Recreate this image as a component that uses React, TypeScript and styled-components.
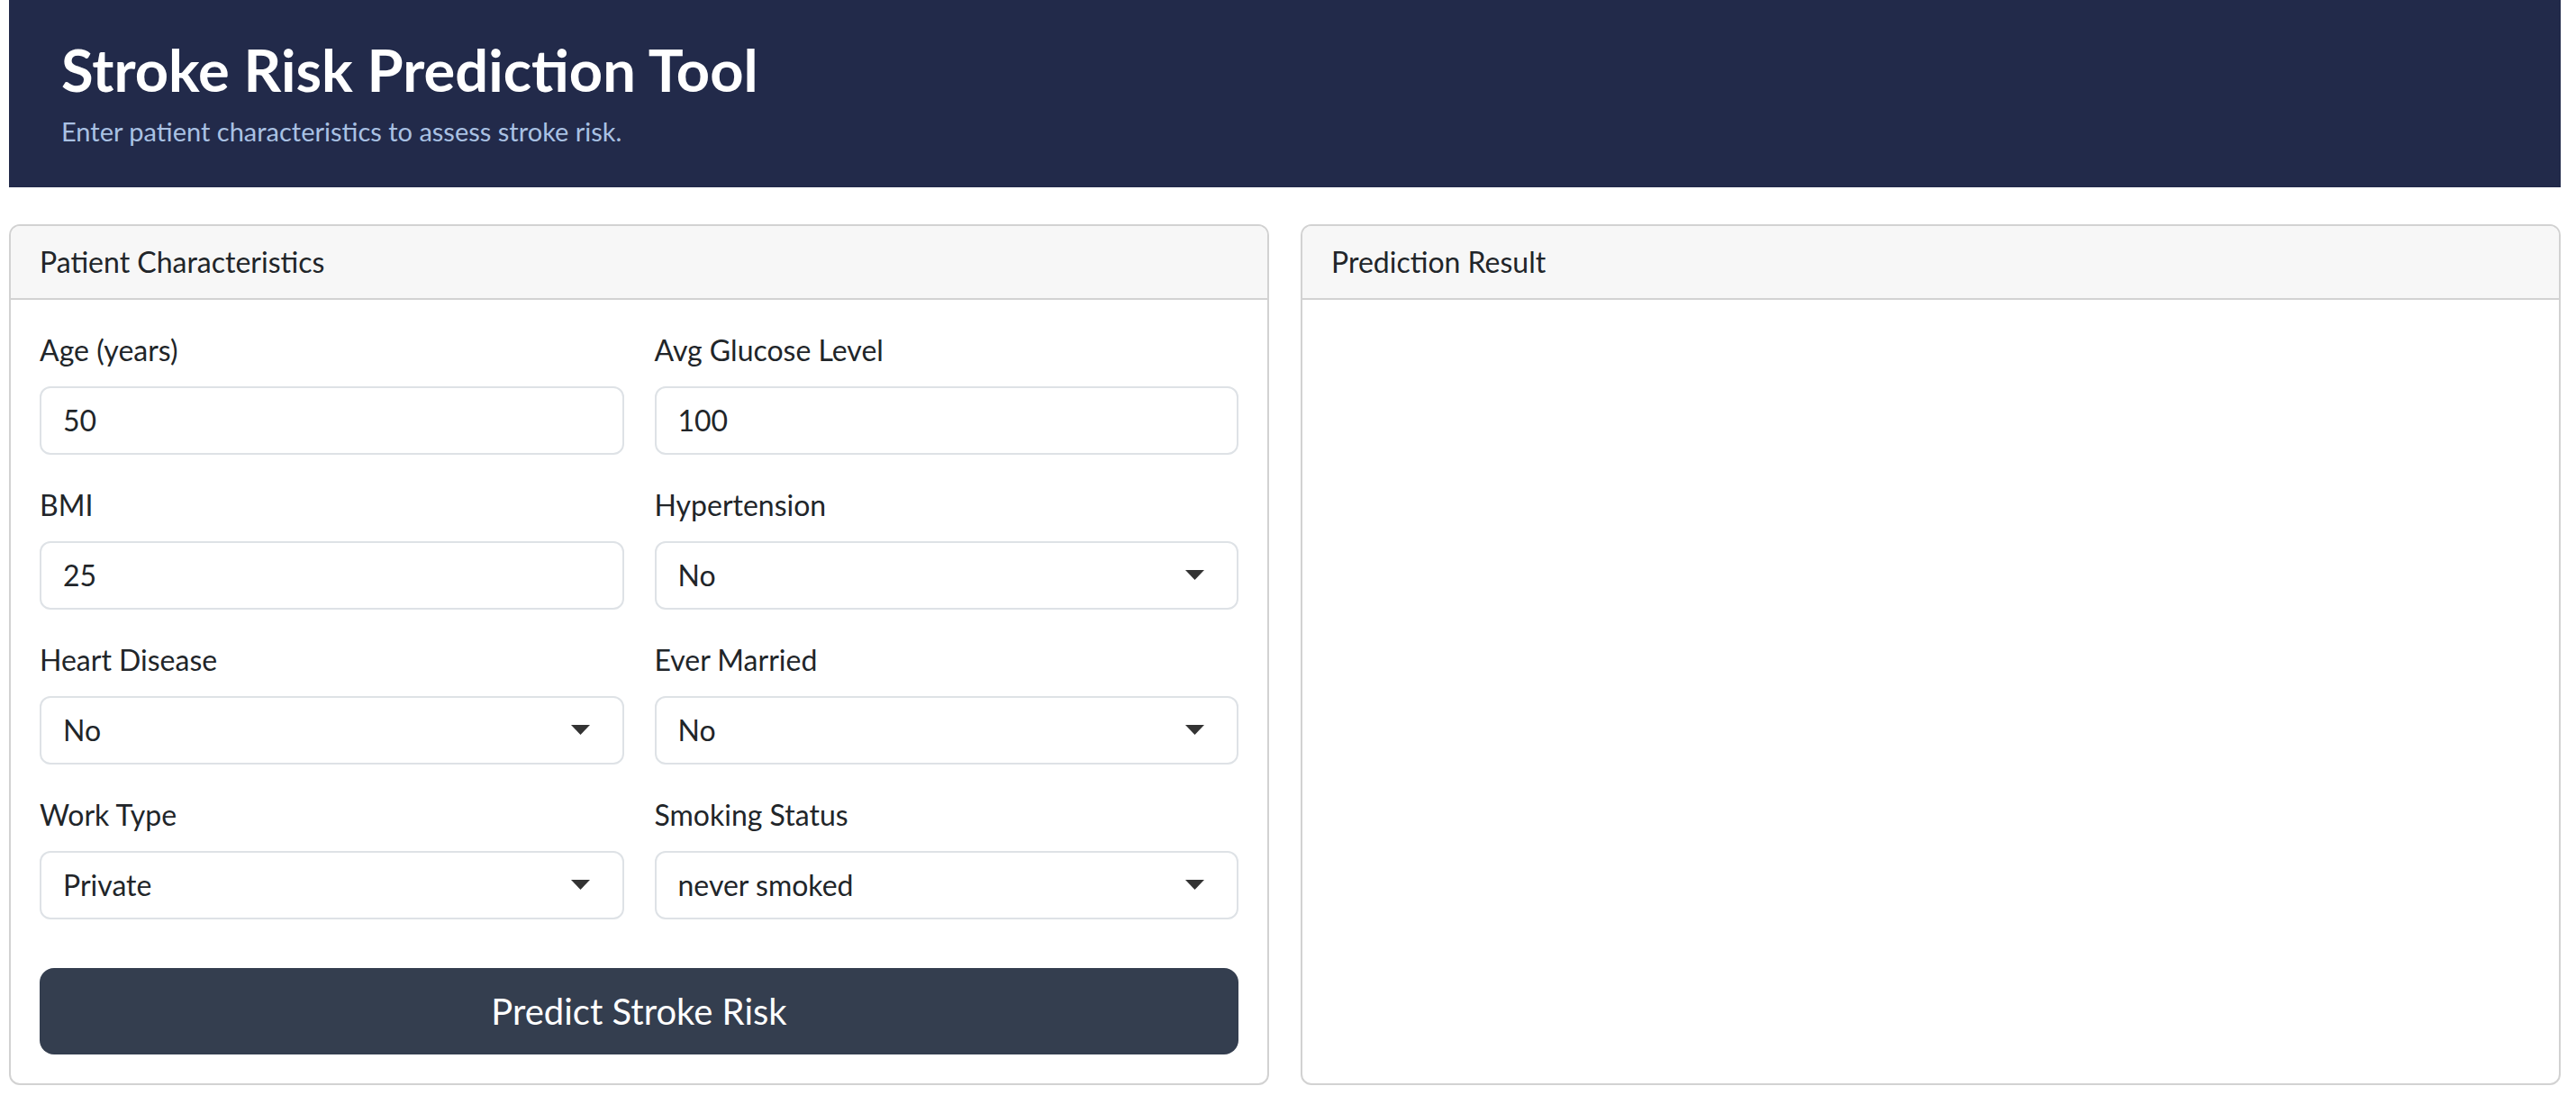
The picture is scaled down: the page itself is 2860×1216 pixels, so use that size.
import React from "react";
import styled, { createGlobalStyle } from "styled-components";

const GlobalStyle = createGlobalStyle`
  *, *::before, *::after { box-sizing: border-box; }
  html, body { margin: 0; padding: 0; background: #ffffff; }
  body {
    font-family: Lato, "Noto Sans", "Liberation Sans", sans-serif;
    font-size: 32px;
    line-height: 1.5;
    color: #212529;
  }
`;

const Page = styled.div`
  padding: 0 17px 0 10px;
`;

const Header = styled.header`
  background: #222a4a;
  padding: 38px 58px 40px;
  margin-bottom: 41px;
`;

const Title = styled.h1`
  margin: 0 0 8px;
  font-size: 65px;
  line-height: 1.2;
  font-weight: 700;
  color: #ffffff;
`;

const Subtitle = styled.p`
  margin: 0;
  font-size: 29px;
  line-height: 1.5;
  color: #a9c1e3;
`;

const Columns = styled.main`
  display: grid;
  grid-template-columns: 1fr 1fr;
  gap: 35px;
  align-items: stretch;
`;

const Card = styled.section`
  display: flex;
  flex-direction: column;
  border: 2px solid #d2d2d2;
  border-radius: 12px;
  background: #ffffff;
  overflow: hidden;
`;

const CardHeader = styled.div`
  background: #f7f7f7;
  border-bottom: 2px solid #d2d2d2;
  padding: 16px 32px;
  font-size: 32px;
  line-height: 48px;
  color: #212529;
`;

const CardBody = styled.div`
  flex: 1;
  padding: 32px;
`;

const FormGrid = styled.div`
  display: grid;
  grid-template-columns: 1fr 1fr;
  column-gap: 34px;
  row-gap: 32px;
`;

const Field = styled.div`
  display: flex;
  flex-direction: column;
`;

const Label = styled.label`
  font-size: 32px;
  line-height: 48px;
  margin-bottom: 16px;
  color: #212529;
`;

const controlStyles = `
  width: 100%;
  height: 76px;
  padding: 12px 24px;
  font-family: Lato, "Noto Sans", "Liberation Sans", sans-serif;
  font-size: 32px;
  line-height: 48px;
  color: #212529;
  background: #ffffff;
  border: 2px solid #dee2e6;
  border-radius: 12px;
  outline: none;
`;

const TextInput = styled.input`
  ${controlStyles}
`;

const SelectWrap = styled.div`
  position: relative;
`;

const Select = styled.select`
  ${controlStyles}
  appearance: none;
  -webkit-appearance: none;
  padding-right: 72px;
`;

const Caret = styled.svg`
  position: absolute;
  right: 38px;
  top: 50%;
  width: 21px;
  height: 11px;
  margin-top: -6px;
  pointer-events: none;
`;

const PredictButton = styled.button`
  display: block;
  width: 100%;
  margin-top: 54px;
  height: 96px;
  padding: 16px 32px;
  border: none;
  border-radius: 16px;
  background: #343e4f;
  color: #ffffff;
  font-family: Lato, "Noto Sans", "Liberation Sans", sans-serif;
  font-size: 40px;
  line-height: 60px;
  cursor: pointer;
`;

type SelectFieldProps = { label: string; value: string; options: string[] };

const SelectField: React.FC<SelectFieldProps> = ({ label, value, options }) => (
  <Field>
    <Label>{label}</Label>
    <SelectWrap>
      <Select defaultValue={value}>
        {options.map((o) => (
          <option key={o} value={o}>
            {o}
          </option>
        ))}
      </Select>
      <Caret viewBox="0 0 21 11">
        <polygon points="0,0 21,0 10.5,11" fill="#333333" />
      </Caret>
    </SelectWrap>
  </Field>
);

type InputFieldProps = { label: string; value: string };

const InputField: React.FC<InputFieldProps> = ({ label, value }) => (
  <Field>
    <Label>{label}</Label>
    <TextInput type="text" defaultValue={value} />
  </Field>
);

export default function App() {
  return (
    <>
      <GlobalStyle />
      <Page>
        <Header>
          <Title>Stroke Risk Prediction Tool</Title>
          <Subtitle>Enter patient characteristics to assess stroke risk.</Subtitle>
        </Header>
        <Columns>
          <Card>
            <CardHeader>Patient Characteristics</CardHeader>
            <CardBody>
              <FormGrid>
                <InputField label="Age (years)" value="50" />
                <InputField label="Avg Glucose Level" value="100" />
                <InputField label="BMI" value="25" />
                <SelectField label="Hypertension" value="No" options={["No", "Yes"]} />
                <SelectField label="Heart Disease" value="No" options={["No", "Yes"]} />
                <SelectField label="Ever Married" value="No" options={["No", "Yes"]} />
                <SelectField
                  label="Work Type"
                  value="Private"
                  options={["Private", "Self-employed", "Govt_job", "children", "Never_worked"]}
                />
                <SelectField
                  label="Smoking Status"
                  value="never smoked"
                  options={["never smoked", "formerly smoked", "smokes", "Unknown"]}
                />
              </FormGrid>
              <PredictButton type="button">Predict Stroke Risk</PredictButton>
            </CardBody>
          </Card>
          <Card>
            <CardHeader>Prediction Result</CardHeader>
            <CardBody />
          </Card>
        </Columns>
      </Page>
    </>
  );
}
